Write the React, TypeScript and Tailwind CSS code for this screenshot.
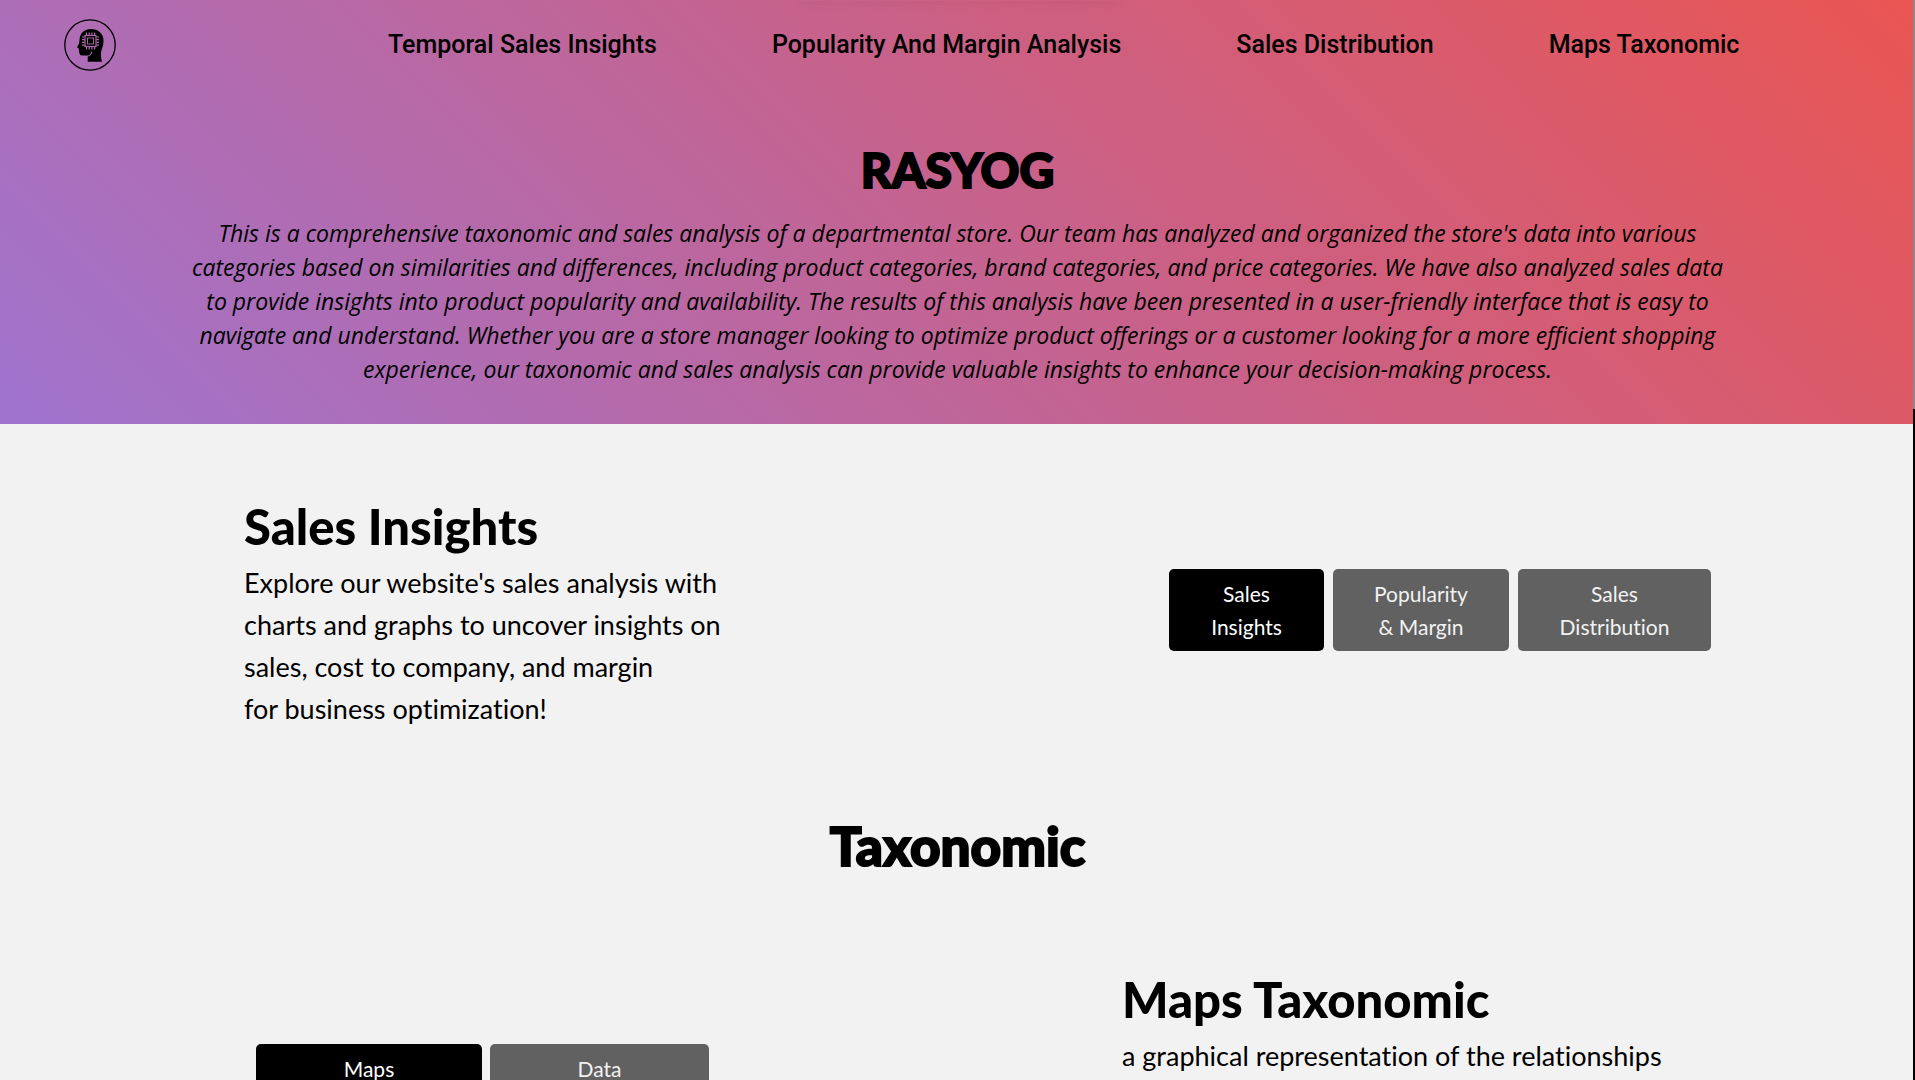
import React from 'react';

const navLinks = ['Temporal Sales Insights', 'Popularity And Margin Analysis', 'Sales Distribution', 'Maps Taxonomic'];

const introLines = [
  "This is a comprehensive taxonomic and sales analysis of a departmental store. Our team has analyzed and organized the store's data into various",
  'categories based on similarities and differences, including product categories, brand categories, and price categories. We have also analyzed sales data',
  'to provide insights into product popularity and availability. The results of this analysis have been presented in a user-friendly interface that is easy to',
  'navigate and understand. Whether you are a store manager looking to optimize product offerings or a customer looking for a more efficient shopping',
  'experience, our taxonomic and sales analysis can provide valuable insights to enhance your decision-making process.',
];

function Lines({ lines }: { lines: string[] }) {
  return (
    <>
      {lines.map((line, i) => (
        <React.Fragment key={line}>
          {i > 0 && <br />}
          {line}
        </React.Fragment>
      ))}
    </>
  );
}

function Logo() {
  return (
    <svg viewBox="0 0 52 52" className="size-13" aria-hidden="true">
      <circle cx="26" cy="26" r="25.2" fill="none" stroke="#000" strokeWidth="1.3" />
      <path
        d="M27 10C19.5 10 15.5 15 15.5 21.5L15 24.5L13.3 27.800C13 28.600 13.600 29.100 14.600 29.200L15.300 33.500C15.400 35.500 16.500 36.500 18 36.500H24.500C26.300 35.500 27.200 34 27.500 32.500L28.400 32.600C28 35.500 26 37.300 23.700 37.800V42.700H38C36.500 38 36.600 33 38.200 29C39.200 26.500 39.500 24 39.500 21.500C39.500 14.500 34 10 27 10Z"
        fill="#000"
      />
      <g stroke="#b06bae" fill="none" strokeWidth="1.2">
        <rect x="21" y="16.500" width="11" height="11" />
        <rect x="23.500" y="19" width="6" height="6" strokeWidth="0.9" />
        <path d="M22.500 16V13.500M25.200 16V13.500M27.900 16V13.500M30.600 16V13.500M22.500 28V30.500M25.200 28V30.500M27.900 28V30.500M30.600 28V30.500M20.500 18H18M20.500 20.700H18M20.500 23.400H18M20.500 26.100H18M32.500 18H35M32.500 20.700H35M32.500 23.400H35M32.500 26.100H35" />
      </g>
    </svg>
  );
}

function TabButton({ lines, active, className }: { lines: string[]; active?: boolean; className: string }) {
  return (
    <button
      type="button"
      className={`flex min-h-[82px] justify-center rounded-[5px] py-2 text-center text-[21px] leading-[33px] ${active ? 'bg-black text-white' : 'bg-[#616161] text-[#f2f2f2]'} ${className}`}
    >
      <span>
        <Lines lines={lines} />
      </span>
    </button>
  );
}

export default function App() {
  return (
    <div className="relative h-screen overflow-hidden bg-[#f2f2f2] font-['Lato',sans-serif] text-black [font-variant-ligatures:none]">
      <header className="relative bg-[linear-gradient(45deg,#9f74cf,#c96188_55%,#e95552)] pb-[38px]">
        <div className="absolute top-0 left-1/2 h-px w-80 -translate-x-1/2 shadow-[0_0_8px_rgba(0,0,0,0.25)]" />
        <nav aria-label="Main" className="flex h-[90px] items-center pl-16">
          <a href="#home" aria-label="Rasyog home">
            <Logo />
          </a>
          <ul className="ml-[272px] flex gap-[115px] font-['Roboto',sans-serif] text-[25px] leading-8 font-medium whitespace-nowrap">
            {navLinks.map((label) => (
              <li key={label}>
                <a href="#section">{label}</a>
              </li>
            ))}
          </ul>
        </nav>
        <h1 className="mt-[50px] text-center text-[48px] leading-[60px] font-black [-webkit-text-stroke:2px_#000] [stroke-linejoin:round]">
          RASYOG
        </h1>
        <p className="mt-4 text-center font-['Open_Sans',sans-serif] text-[23px] leading-[34px] font-medium whitespace-nowrap italic">
          <Lines lines={introLines} />
        </p>
      </header>

      <main>
        <section className="flex items-center justify-between pt-[66px] pr-[204px] pl-[244px]">
          <div>
            <h2 className="text-[49px] leading-[72px] font-black">Sales Insights</h2>
            <p className="text-[27px] leading-[42px] whitespace-nowrap">
              <Lines
                lines={[
                  "Explore our website's sales analysis with",
                  'charts and graphs to uncover insights on',
                  'sales, cost to company, and margin',
                  'for business optimization!',
                ]}
              />
            </p>
          </div>
          <div className="flex gap-[9px]">
            <TabButton active lines={['Sales', 'Insights']} className="w-[155px]" />
            <TabButton lines={['Popularity', '& Margin']} className="w-[176px]" />
            <TabButton lines={['Sales', 'Distribution']} className="w-[193px]" />
          </div>
        </section>

        <h2 className="mt-[84px] text-center text-[53px] leading-[64px] font-black [-webkit-text-stroke:2px_#000] [stroke-linejoin:round]">
          Taxonomic
        </h2>

        <section className="flex items-start justify-between pt-[85px] pr-[204px] pl-[256px]">
          <div className="flex gap-2 pt-[81px]">
            <TabButton active lines={['Maps']} className="w-[226px]" />
            <TabButton lines={['Data']} className="w-[219px]" />
          </div>
          <div className="w-[589px]">
            <h2 className="text-[49px] leading-[72px] font-black">Maps Taxonomic</h2>
            <p className="text-[27px] leading-[42px] whitespace-nowrap">a graphical representation of the relationships</p>
          </div>
        </section>
      </main>

      <div className="absolute inset-y-0 right-0 w-[2px] bg-black" />
      <div className="absolute top-0 right-0 h-[409px] w-[2px] bg-[#8a8a8a]" />
    </div>
  );
}
